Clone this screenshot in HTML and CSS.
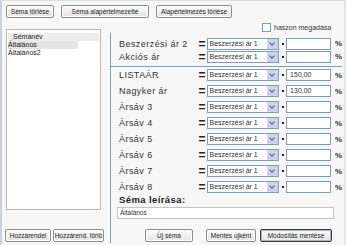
FILE: index.html
```html
<!DOCTYPE html>
<html lang="hu">
<head>
  <meta charset="UTF-8" />
  <title>Árképzési sémák</title>
  <link rel="stylesheet" href="styles.css">
</head>
<body>
  <div class="window">
    <div class="toolbar">
      <button class="btn w47">Séma törlése</button>
      <button class="btn w87">Séma alapértelmezetté</button>
      <button class="btn w75">Alapértelmezés törlése</button>
    </div>

    <div class="main">
      <div class="left">
        <div class="list">
          <div class="list-head">Sémanév</div>
          <div class="list-item selected">Általános</div>
          <div class="list-item">Általános2</div>
        </div>
        <div class="left-buttons">
          <button class="btn w46">Hozzárendel</button>
          <button class="btn w51">Hozzárend. törlö</button>
        </div>
      </div>

      <div class="right">
        <label class="check"><span class="box"></span>haszon megadása</label>

        <div class="panel">
          <div class="top-rows">
            <div class="row short"><span class="label">Beszerzési ár 2</span><span class="eq">=</span><span class="select">Beszerzési ár 1<i class="arrow"></i></span><span class="dot"></span><span class="input"></span><span class="pct">%</span></div>
            <div class="row short"><span class="label">Akciós ár</span><span class="eq">=</span><span class="select">Beszerzési ár 1<i class="arrow"></i></span><span class="dot"></span><span class="input"></span><span class="pct">%</span></div>
          </div>

          <div class="row"><span class="label">LISTAÁR</span><span class="eq">=</span><span class="select">Beszerzési ár 1<i class="arrow"></i></span><span class="dot"></span><span class="input">150,00</span><span class="pct">%</span></div>
          <div class="row"><span class="label">Nagyker ár</span><span class="eq">=</span><span class="select">Beszerzési ár 1<i class="arrow"></i></span><span class="dot"></span><span class="input">130,00</span><span class="pct">%</span></div>
          <div class="row"><span class="label">Ársáv 3</span><span class="eq">=</span><span class="select">Beszerzési ár 1<i class="arrow"></i></span><span class="dot"></span><span class="input"></span><span class="pct">%</span></div>
          <div class="row"><span class="label">Ársáv 4</span><span class="eq">=</span><span class="select">Beszerzési ár 1<i class="arrow"></i></span><span class="dot"></span><span class="input"></span><span class="pct">%</span></div>
          <div class="row"><span class="label">Ársáv 5</span><span class="eq">=</span><span class="select">Beszerzési ár 1<i class="arrow"></i></span><span class="dot"></span><span class="input"></span><span class="pct">%</span></div>
          <div class="row"><span class="label">Ársáv 6</span><span class="eq">=</span><span class="select">Beszerzési ár 1<i class="arrow"></i></span><span class="dot"></span><span class="input"></span><span class="pct">%</span></div>
          <div class="row"><span class="label">Ársáv 7</span><span class="eq">=</span><span class="select">Beszerzési ár 1<i class="arrow"></i></span><span class="dot"></span><span class="input"></span><span class="pct">%</span></div>
          <div class="row"><span class="label">Ársáv 8</span><span class="eq">=</span><span class="select">Beszerzési ár 1<i class="arrow"></i></span><span class="dot"></span><span class="input"></span><span class="pct">%</span></div>

          <div class="desc-title">Séma leírása:</div>
          <div class="desc-input">Általános</div>

          <div class="right-buttons">
            <button class="btn w48 new">Új séma</button>
            <button class="btn w50">Mentés újként</button>
            <button class="btn w72 default">Módosítás mentése</button>
          </div>
        </div>
      </div>
    </div>
  </div>
</body>
</html>
```

FILE: styles.css
```css
/* ablak kb. 346x245 */
body {
  margin: 0;
  font-family: 'Liberation Sans', Arial, sans-serif;
  background: #fff;
}

.window {
  width: 346px;
  height: 245px;
  background: #f7f7f7;
  border-left: 2px solid #c9d3e0;
  border-right: 2px solid #dfe5ee;
  border-top: 1px solid #d8dde4;
  box-sizing: border-box;
  overflow: hidden;
}

.btn {
  height: 13px;
  padding: 0;
  font-family: inherit;
  font-size: 6.5px;
  color: #222;
  background: linear-gradient(#fbfbfb, #e4e4e4);
  border: 1px solid #8c8c8c;
  border-radius: 2px;
  box-shadow: inset 0 0 0 1px #fff;
  line-height: 11px;
  white-space: nowrap;
}

.btn.default {
  border-color: #3a3a3a;
  box-shadow: inset 0 0 0 1px #a9b3c4;
}

.w46 { width: 46px; }
.w47 { width: 48px; }
.w48 { width: 48px; }
.w50 { width: 50px; }
.w51 { width: 51px; }
.w72 { width: 72px; }
.w75 { width: 76px; }
.w87 { width: 88px; }

.toolbar {
  display: flex;
  gap: 7px;
  padding: 4px 0 0 4px;
}

.main {
  display: flex;
}

.left {
  width: 108px;
  padding: 11px 0 0 4px;
  box-sizing: border-box;
}

.list {
  width: 95px;
  height: 181px;
  background: #fff;
  border: 1px solid #b9b9b9;
  box-sizing: border-box;
  padding: 3px 1px;
  font-size: 7px;
  color: #222;
}

.list-head {
  background: #ececec;
  height: 8px;
  line-height: 8px;
  padding-left: 5px;
}

.list-item {
  height: 8px;
  line-height: 8px;
  width: 70px;
}

.list-item.selected {
  background: #e4e4e4;
}

.left-buttons {
  display: flex;
  gap: 2px;
  margin: 19px 0 0 -1px;
}

.right {
  width: 232px;
}

.check {
  display: flex;
  align-items: center;
  gap: 3px;
  height: 9px;
  margin: 5px 0 0 152px;
  font-size: 7px;
  color: #333;
}

.box {
  width: 9px;
  height: 9px;
  background: #fff;
  border: 1px solid #7f9db9;
  box-sizing: border-box;
}

.panel {
  margin-top: 1px;
  height: 210px;
  border-left: 1px solid #7f9db9;
  padding-left: 8px;
}

.top-rows {
  padding: 4px 0 3px;
  margin-left: -8px;
  padding-left: 8px;
  border-bottom: 1px solid #7f9db9;
}

.row {
  display: flex;
  align-items: center;
  height: 16px;
}

.row.short {
  height: 13px;
}

.label {
  width: 80px;
  font-size: 9px;
  letter-spacing: 0.45px;
  color: #333;
}

.eq {
  width: 8px;
  font-size: 12px;
  font-weight: bold;
  line-height: 8px;
  color: #222;
}

.select {
  position: relative;
  width: 73px;
  height: 12px;
  line-height: 10px;
  font-size: 7px;
  padding-left: 2px;
  background: #fff;
  border: 1px solid #7f9db9;
  box-sizing: border-box;
  color: #333;
}

.arrow {
  position: absolute;
  right: 0;
  top: 0;
  width: 11px;
  height: 10px;
  background: #c9d3ea;
}

.arrow::after {
  content: "";
  position: absolute;
  left: 3px;
  top: 2px;
  width: 3px;
  height: 3px;
  border-right: 1.5px solid #4d6185;
  border-bottom: 1.5px solid #4d6185;
  transform: rotate(45deg);
}

.dot {
  width: 2px;
  height: 2px;
  background: #222;
  margin: 0 2px 0 3px;
}

.input {
  width: 45px;
  height: 12px;
  line-height: 10px;
  font-size: 7px;
  padding-left: 3px;
  background: #fff;
  border: 1px solid #7f9db9;
  box-sizing: border-box;
  color: #333;
}

.pct {
  font-size: 8px;
  font-weight: bold;
  margin-left: 4px;
  color: #333;
}

.desc-title {
  font-size: 9.5px;
  font-weight: bold;
  letter-spacing: 0.4px;
  height: 10px;
  line-height: 10px;
  color: #222;
}

.desc-input {
  width: 217px;
  height: 12px;
  margin: 2px 0 0 -2px;
  padding-left: 2px;
  box-sizing: border-box;
  background: #fff;
  border: 1px solid #c4c4c4;
  font-size: 6.5px;
  line-height: 10px;
  color: #333;
}

.right-buttons {
  display: flex;
  gap: 4px;
  margin: 10px 0 0 26px;
}

.right-buttons .new {
  margin-right: 9px;
}
```
